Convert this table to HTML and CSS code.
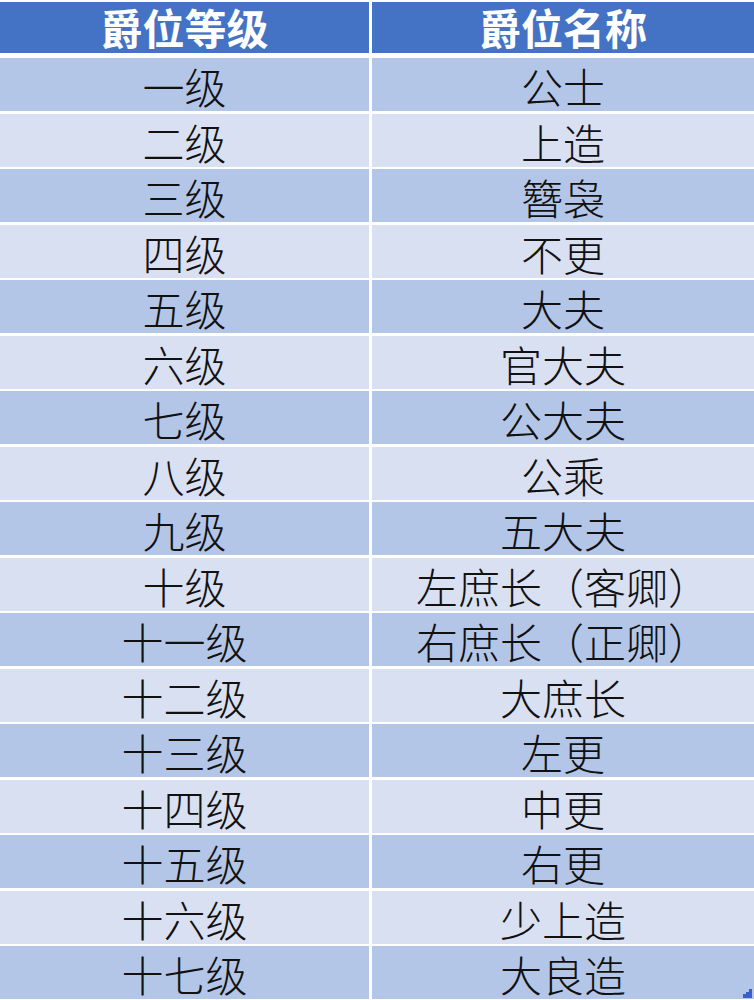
FILE: index.html
```html
<!DOCTYPE html>
<html lang="zh">
<head>
<meta charset="utf-8">
<link rel="stylesheet" href="styles.css">
</head>
<body>
<div class="table">
  <div class="row head"><div class="cell">爵位等级</div><div class="cell">爵位名称</div></div>
  <div class="row odd"><div class="cell">一级</div><div class="cell">公士</div></div>
  <div class="row even"><div class="cell">二级</div><div class="cell">上造</div></div>
  <div class="row odd"><div class="cell">三级</div><div class="cell">簪袅</div></div>
  <div class="row even"><div class="cell">四级</div><div class="cell">不更</div></div>
  <div class="row odd"><div class="cell">五级</div><div class="cell">大夫</div></div>
  <div class="row even"><div class="cell">六级</div><div class="cell">官大夫</div></div>
  <div class="row odd"><div class="cell">七级</div><div class="cell">公大夫</div></div>
  <div class="row even"><div class="cell">八级</div><div class="cell">公乘</div></div>
  <div class="row odd"><div class="cell">九级</div><div class="cell">五大夫</div></div>
  <div class="row even"><div class="cell">十级</div><div class="cell">左庶长（客卿）</div></div>
  <div class="row odd"><div class="cell">十一级</div><div class="cell">右庶长（正卿）</div></div>
  <div class="row even"><div class="cell">十二级</div><div class="cell">大庶长</div></div>
  <div class="row odd"><div class="cell">十三级</div><div class="cell">左更</div></div>
  <div class="row even"><div class="cell">十四级</div><div class="cell">中更</div></div>
  <div class="row odd"><div class="cell">十五级</div><div class="cell">右更</div></div>
  <div class="row even"><div class="cell">十六级</div><div class="cell">少上造</div></div>
  <div class="row odd"><div class="cell">十七级</div><div class="cell">大良造</div></div>
</div>
<div class="mark"></div>
</body>
</html>
```
FILE: styles.css
```css
html, body {
  margin: 0;
  padding: 0;
  background: #ffffff;
  overflow: hidden;
}
body {
  width: 754px;
  height: 1000px;
  position: relative;
  font-family: "Noto Sans CJK SC", "Noto Sans", sans-serif;
}
.table {
  display: flex;
  flex-direction: column;
  gap: 3px;
  padding-top: 2px;
}
.row {
  display: grid;
  grid-template-columns: 369px 1fr;
  column-gap: 3px;
  height: 52.5px;
}
.cell {
  display: flex;
  align-items: center;
  justify-content: center;
  font-size: 42px;
  font-weight: 300;
  color: #111;
  line-height: 1.2;
  padding-top: 3px;
  box-sizing: border-box;
  overflow: visible;
}
.head {
  height: 51px;
  margin-bottom: 2px;
}
.head .cell {
  background: #4472c4;
  color: #ffffff;
  font-weight: 700;
  padding-top: 0;
}
.odd .cell { background: #b4c6e7; }
.even .cell { background: #d9e0f1; }
.mark {
  position: absolute;
  right: 2px;
  bottom: 2px;
  width: 9px;
  height: 9px;
  background: #3a5fc8;
  clip-path: polygon(100% 0, 100% 100%, 0 100%, 0 55%, 33% 55%, 33% 33%, 66% 33%, 66% 0);
}
```
